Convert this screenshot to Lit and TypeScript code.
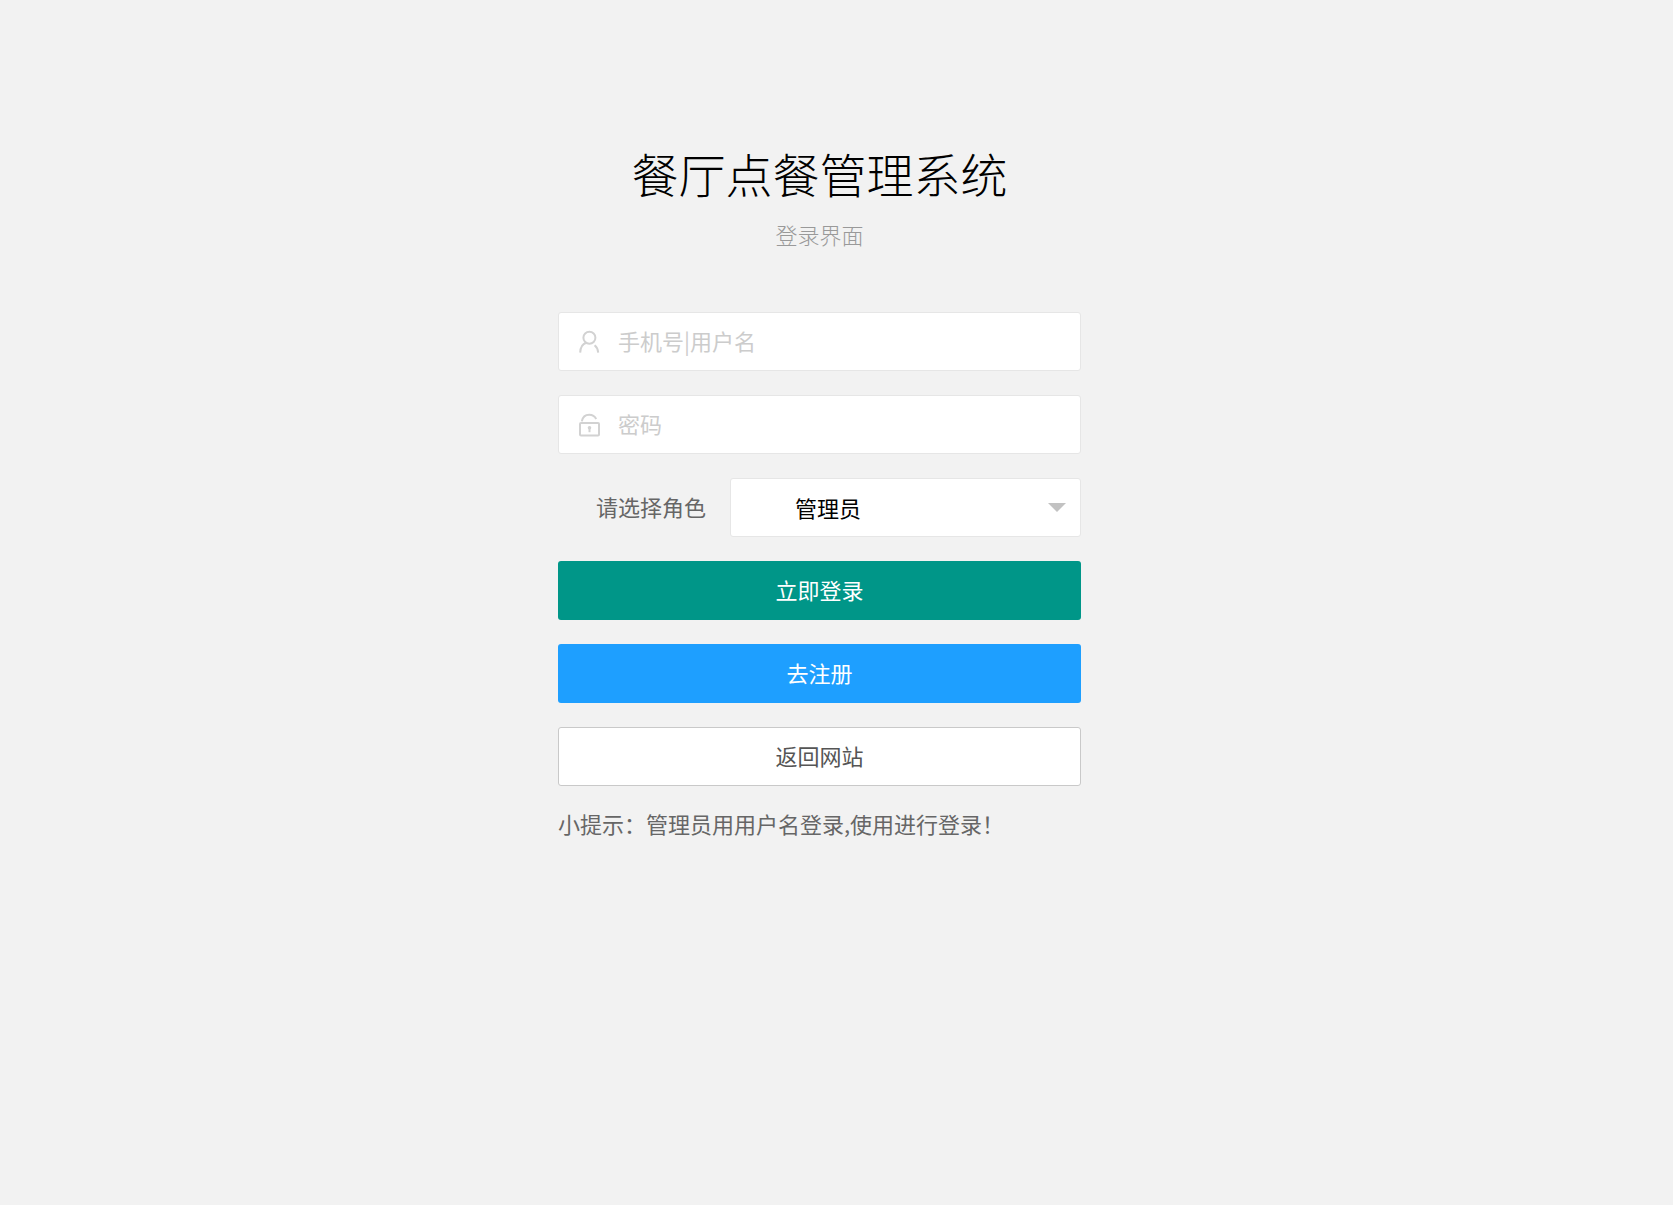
import { LitElement, html, css } from "lit";
import { customElement, state } from "lit/decorators.js";

@customElement("app-root")
export class AppRoot extends LitElement {
  static styles = css`
    :host {
      display: block;
      box-sizing: border-box;
      min-height: 100vh;
      padding: 141px 34px 48px 0;
      background: #f2f2f2;
      color: #666;
      font: 22px/36px "Noto Sans CJK SC", sans-serif;
    }
    * {
      box-sizing: border-box;
    }
    .login {
      width: 100%;
      max-width: 523px;
      margin: 0 auto;
    }
    .header {
      margin-bottom: 60px;
      text-align: center;
    }
    .title {
      margin: 0 0 11px;
      color: #000;
      font-size: 47px;
      font-weight: 300;
      line-height: 64px;
    }
    .subtitle {
      margin: 0;
      color: #999;
      font-weight: 300;
    }
    .form {
      display: grid;
      gap: 24px;
    }
    .field {
      display: grid;
      grid-template-columns: 59px 1fr;
      height: 59px;
      border: 1px solid #e6e6e6;
      border-radius: 3px;
      background: #fff;
    }
    .icon-label {
      display: grid;
      place-items: center;
      color: #d2d2d2;
    }
    .icon {
      display: block;
      width: 24px;
      height: 24px;
      fill: none;
      stroke: currentColor;
      stroke-width: 2;
    }
    .input {
      width: 100%;
      min-width: 0;
      padding: 0 0 4px;
      border: 0;
      outline: 0;
      background: transparent;
      color: #333;
      font: inherit;
    }
    .input::placeholder {
      color: #ccc;
      opacity: 1;
    }
    .role {
      display: grid;
      grid-template-columns: 148px 1fr;
      column-gap: 24px;
      align-items: center;
    }
    .role-label {
      padding-bottom: 4px;
      text-align: right;
    }
    .select-box {
      display: grid;
      grid-template-columns: 1fr 32px;
      align-items: center;
      height: 59px;
      border: 1px solid #e6e6e6;
      border-radius: 3px;
      background: #fff;
    }
    .select {
      grid-area: 1 / 1 / 2 / 3;
      width: 100%;
      height: 100%;
      padding: 0 32px 2px 64px;
      border: 0;
      outline: 0;
      appearance: none;
      background: transparent;
      color: #000;
      font: inherit;
    }
    .caret {
      grid-area: 1 / 2 / 2 / 3;
      width: 18px;
      height: 9px;
      background: #c2c2c2;
      clip-path: polygon(0 0, 100% 0, 50% 100%);
      pointer-events: none;
    }
    .button {
      width: 100%;
      height: 59px;
      padding: 0 0 4px;
      border: 0;
      border-radius: 3px;
      color: #fff;
      font: inherit;
      cursor: pointer;
    }
    .primary {
      background: #009688;
    }
    .normal {
      background: #1e9fff;
    }
    .plain {
      border: 1px solid #c9c9c9;
      background: #fff;
      color: #555;
    }
    .tip {
      margin: 19px 0 0;
    }
  `;

  @state() private role = "管理员";

  private chooseRole(event: Event) {
    this.role = (event.target as HTMLSelectElement).value;
  }

  render() {
    return html`
      <main class="login">
        <header class="header">
          <h1 class="title">餐厅点餐管理系统</h1>
          <p class="subtitle">登录界面</p>
        </header>
        <form class="form" @submit=${(e: Event) => e.preventDefault()}>
          <div class="field">
            <label class="icon-label" for="username">
              <svg class="icon" viewBox="0 0 24 24" aria-hidden="true">
                <circle cx="12.4" cy="7.8" r="6" />
                <path d="M9.2 12.8C5.4 14 3.4 17.4 3.2 22.6M17.6 15.2c2.2 1.8 3.4 4.2 3.6 7.4" />
              </svg>
            </label>
            <input class="input" id="username" type="text" placeholder="手机号|用户名" />
          </div>
          <div class="field">
            <label class="icon-label" for="password">
              <svg class="icon" viewBox="0 0 24 24" aria-hidden="true">
                <rect x="3" y="10" width="19" height="12.6" rx="1" />
                <path d="M4.8 8.4C5.6 4.4 8.4 1.8 12.2 1.8c3 0 5.6 1.4 7 4.2" />
                <circle cx="12.5" cy="14.8" r="1.8" fill="currentColor" stroke="none" />
                <path d="M12.5 15v4.2" />
              </svg>
            </label>
            <input class="input" id="password" type="password" placeholder="密码" />
          </div>
          <div class="role">
            <label class="role-label" for="role">请选择角色</label>
            <div class="select-box">
              <select class="select" id="role" .value=${this.role} @change=${this.chooseRole}>
                <option value="管理员">管理员</option>
              </select>
              <span class="caret"></span>
            </div>
          </div>
          <button class="button primary" type="submit">立即登录</button>
          <button class="button normal" type="button">去注册</button>
          <button class="button plain" type="button">返回网站</button>
        </form>
        <p class="tip">小提示：管理员用用户名登录,使用进行登录！</p>
      </main>
    `;
  }
}
